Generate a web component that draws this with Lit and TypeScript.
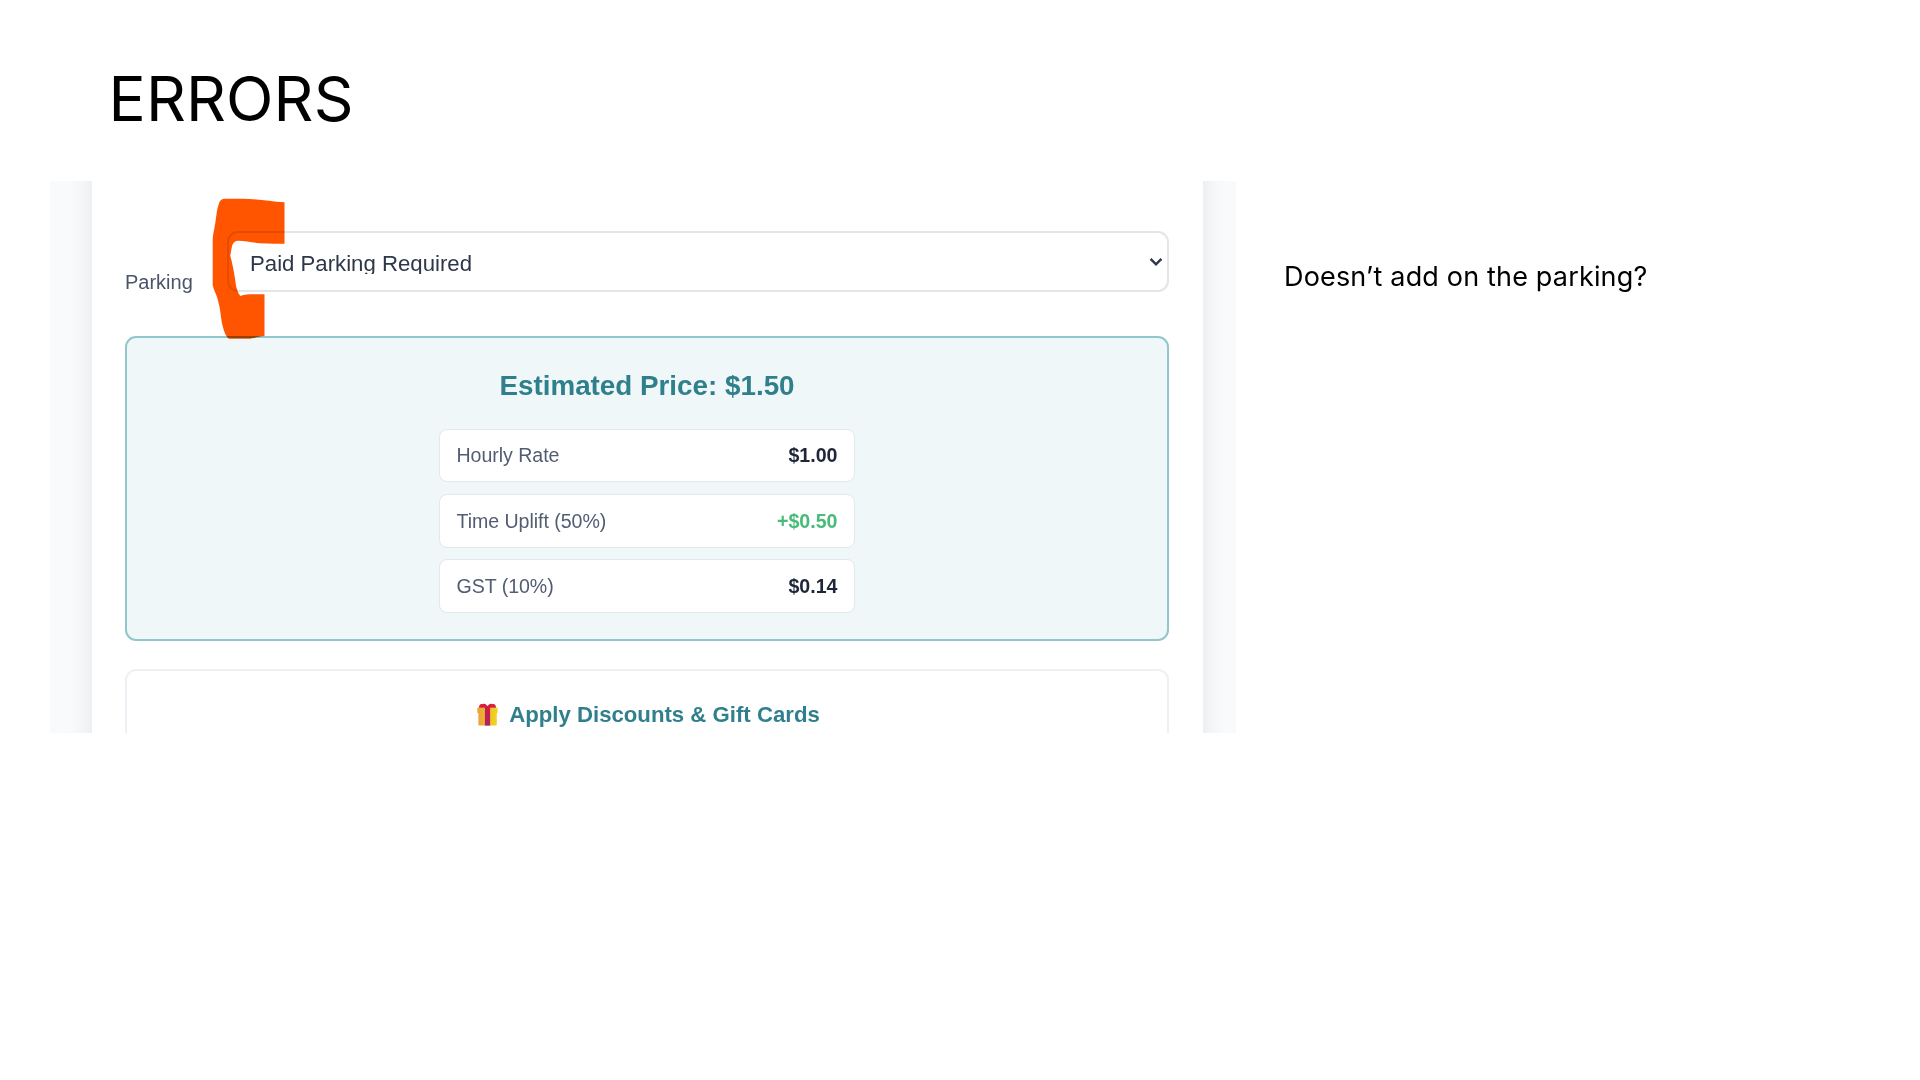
import { LitElement, html, css } from "lit";
import { customElement, property } from "lit/decorators.js";

@customElement("price-row")
class PriceRow extends LitElement {
  @property() label = "";
  @property() amount = "";
  @property({ type: Boolean }) positive = false;

  static styles = css`
    :host {
      display: flex;
      box-sizing: border-box;
      align-items: center;
      justify-content: space-between;
      height: 53.8px;
      padding: 0 16.5px 0 16.5px;
      border: 1px solid #e2e8f0;
      border-radius: 8px;
      background: #fff;
      font-size: 19.6px;
      line-height: 24px;
    }
    .label { color: #525d73; letter-spacing: -0.05px; }
    .amount { color: #1f2638; font-weight: 700; }
    .positive { color: #48bb78; }
  `;

  render() {
    return html`
      <span class="label">${this.label}</span>
      <span class="amount ${this.positive ? "positive" : ""}">${this.amount}</span>
    `;
  }
}

@customElement("booking-form")
class BookingForm extends LitElement {
  static styles = css`
    :host {
      display: block;
      position: relative;
      width: 1186px;
      height: 551.5px;
      overflow: hidden;
      background: #f8fafc;
      font-family: "Liberation Sans", Arial, sans-serif;
    }
    .page {
      box-sizing: border-box;
      width: 1110.6px;
      height: 720px;
      margin: -60px 0 0 42px;
      padding: 110px 33.6px 0 33px;
      background: #fff;
      box-shadow: 0 6px 24px rgba(0, 0, 0, 0.09);
    }
    .field { display: flex; height: 61px; }
    .field-label {
      width: 102px;
      padding-top: 38.5px;
      font-size: 20px;
      line-height: 24px;
      color: #4a5568;
    }
    .select {
      flex: 1;
      box-sizing: border-box;
      display: flex;
      align-items: center;
      justify-content: space-between;
      padding: 0 4px 0 21px;
      border: 2px solid #e4e5ea;
      border-radius: 11px;
    }
    .value {
      height: 24px;
      overflow: hidden;
      font-size: 22.2px;
      line-height: 27px;
      color: #2d3748;
    }
    .chevron { width: 14px; height: 10px; }
    .estimate {
      box-sizing: border-box;
      height: 305.4px;
      margin-top: 44px;
      padding-top: 32px;
      border: 2px solid #93c6cb;
      border-radius: 11px;
      background: #eff7f9;
      display: flex;
      flex-direction: column;
      align-items: center;
    }
    .title {
      font-size: 27.8px;
      line-height: 32px;
      font-weight: 700;
      color: #2f808c;
    }
    .rows {
      display: grid;
      gap: 11.5px;
      width: 416px;
      margin-top: 26.5px;
    }
    .discounts {
      box-sizing: border-box;
      height: 120px;
      margin-top: 27.6px;
      padding: 30px 0 0 3px;
      border: 2px solid #edf0f5;
      border-radius: 11px;
      display: flex;
      justify-content: center;
      align-items: flex-start;
      gap: 11px;
      font-size: 22.2px;
      line-height: 28px;
      font-weight: 700;
      color: #2f808c;
    }
    .gift { width: 21px; height: 23px; margin-top: 2.5px; }
    .marker {
      position: absolute;
      left: 150px;
      top: 9px;
      width: 100px;
      height: 160px;
      mix-blend-mode: multiply;
    }
  `;

  render() {
    return html`
      <div class="page">
        <div class="field">
          <span class="field-label">Parking</span>
          <div class="select">
            <span class="value">Paid Parking Required</span>
            <svg class="chevron" viewBox="0 0 14 10">
              <path d="M1.6 1.8 7 7.3l5.4-5.5" fill="none" stroke="#2d3748" stroke-width="2.4" />
            </svg>
          </div>
        </div>
        <div class="estimate">
          <div class="title">Estimated Price: $1.50</div>
          <div class="rows">
            <price-row label="Hourly Rate" amount="$1.00"></price-row>
            <price-row label="Time Uplift (50%)" amount="+$0.50" positive></price-row>
            <price-row label="GST (10%)" amount="$0.14"></price-row>
          </div>
        </div>
        <div class="discounts">
          <svg class="gift" viewBox="0 0 21 23">
            <defs>
              <linearGradient id="box"><stop stop-color="#e9a23b" /><stop offset="1" stop-color="#f3d51f" /></linearGradient>
              <linearGradient id="ribbon" x2="0" y2="1"><stop stop-color="#d01c3c" /><stop offset="1" stop-color="#a8246c" /></linearGradient>
            </defs>
            <rect x="1.4" y="9" width="18.4" height="13.6" rx="1" fill="url(#box)" />
            <rect x="0.3" y="4.6" width="20.4" height="5.6" rx="1" fill="url(#box)" />
            <path d="M2 4.8C2 1.4 4 .4 5.4 1.3 7.2.3 8.6 1 10.5 3.2 12.4 1 13.8.3 15.6 1.3 17 .4 19 1.4 19 4.8Z" fill="#d81f3a" />
            <rect x="7.9" y="3.5" width="5.2" height="19.1" fill="url(#ribbon)" />
          </svg>
          <span>Apply Discounts &amp; Gift Cards</span>
        </div>
      </div>
      <svg class="marker" viewBox="200 190 100 160">
        <path
          fill="#ff5500"
          d="M284.5 202.3C270 201.5 257 199 243.3 198.7H226C222 198.7 220 200 219 203.5C217 209 216.6 214 215.7 220C215 227 213 233 212.7 239V285C214 291 217 295 218.3 301.7C220.5 309 220.5 315 221.7 321.7C223 328 224.5 333 226.7 336.5C228 338.5 229 338.8 231 338.8H248C254 338.6 258 336.3 264.5 336V294.3H250C246 294.3 243 295 240.7 296C239 295 238 292.5 237.3 290C235.5 285.5 235.5 281 234.7 276.7C233.5 269 232 262 230.3 255.7C231 252 231.5 248 232.3 245C234 242 235.5 240.7 238 240.7C246 241 253 242.5 260 243.3C268 243.9 276 243.7 284.5 243.7Z"
        />
      </svg>
    `;
  }
}

@customElement("app-root")
class AppRoot extends LitElement {
  static styles = css`
    :host {
      display: block;
      box-sizing: border-box;
      width: 1920px;
      height: 1080px;
      overflow: hidden;
      background: #fff;
      color: #000;
      font-family: Inter, "Noto Sans", sans-serif;
    }
    .heading {
      margin: 0;
      padding: 62px 0 0 108.5px;
      height: 119px;
      font-size: 62px;
      line-height: 73px;
      font-weight: 370;
      letter-spacing: 0.15px;
    }
    .content {
      display: flex;
      gap: 48px;
      padding-left: 50px;
    }
    .note {
      margin: 0;
      padding-top: 80px;
      font-size: 27px;
      line-height: 32px;
      font-weight: 370;
      letter-spacing: 0.17px;
    }
  `;

  render() {
    return html`
      <h1 class="heading">ERRORS</h1>
      <div class="content">
        <booking-form></booking-form>
        <p class="note">Doesn’t add on the parking?</p>
      </div>
    `;
  }
}
